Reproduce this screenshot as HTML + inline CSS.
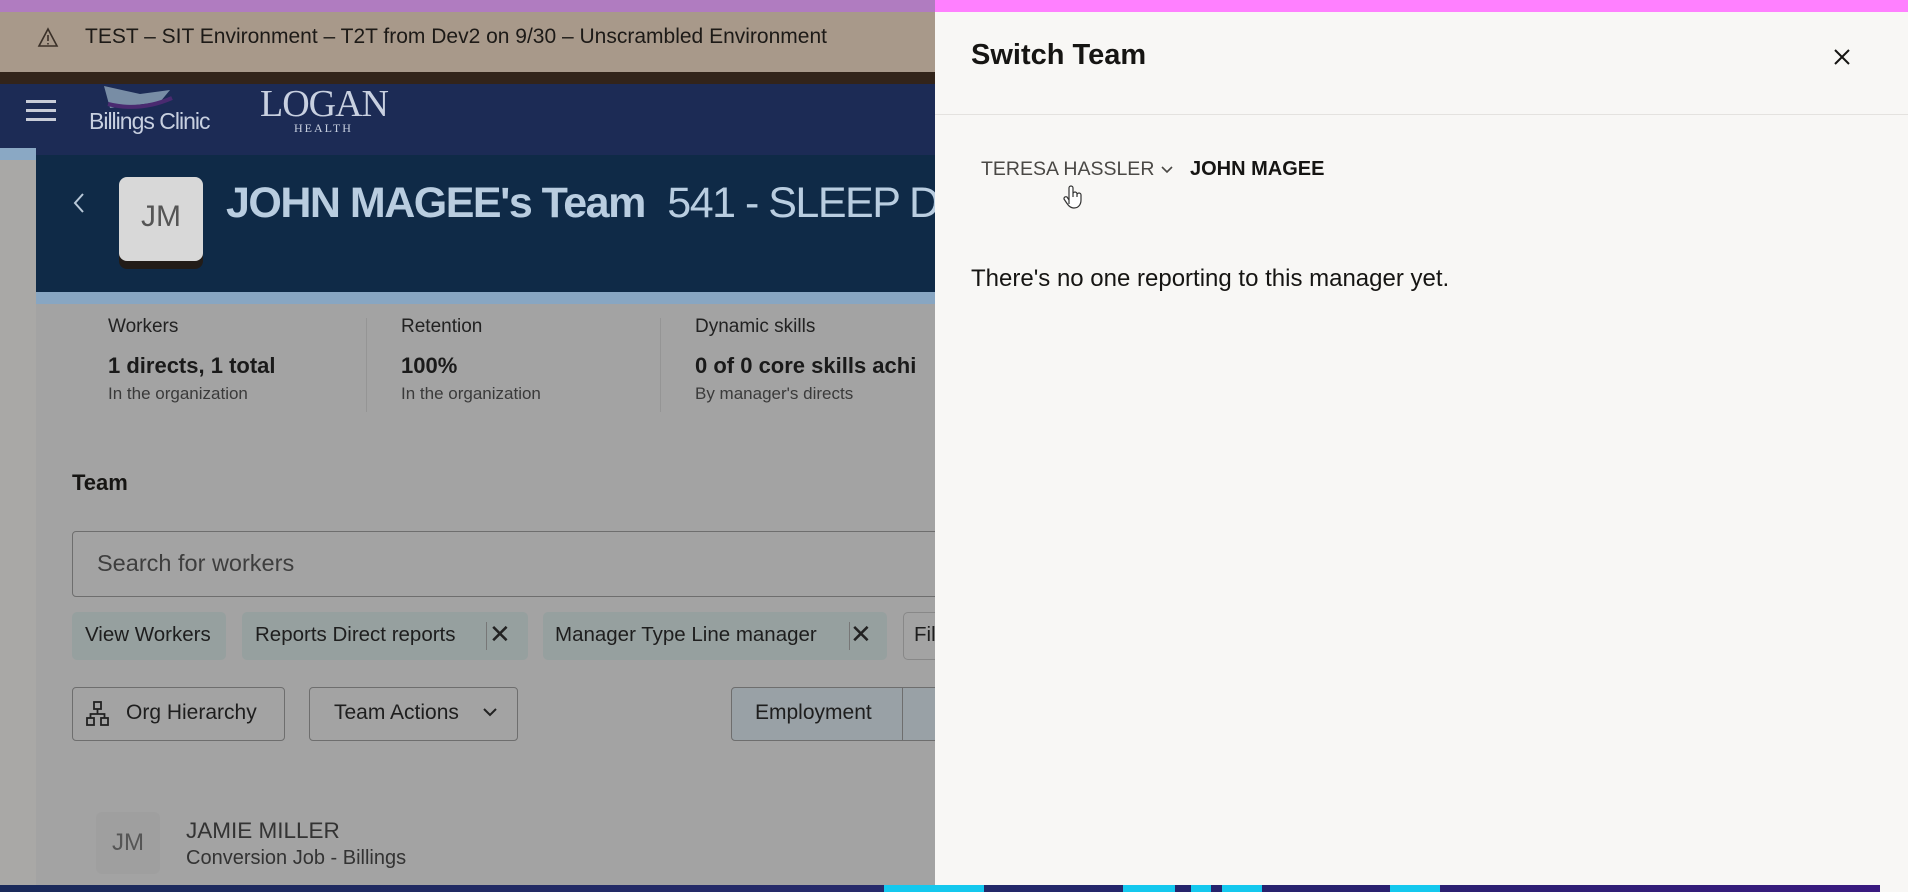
<!DOCTYPE html>
<html><head><meta charset="utf-8"><style>
*{margin:0;padding:0;box-sizing:border-box}
body{width:1908px;height:892px;overflow:hidden;position:relative;font-family:"Liberation Sans",sans-serif;background:#a3a3a3;color:#161513}
.a{position:absolute;white-space:nowrap}
</style></head><body>
<div class="a" style="left:0;top:0;width:935px;height:12px;background:#b07cc0"></div>
<div class="a" style="left:0;top:12px;width:935px;height:60px;background:#a8998a"></div>
<svg class="a" style="left:37px;top:27px" width="22" height="22" viewBox="0 0 22 22"><path d="M11 2L20 19H2Z" fill="none" stroke="#3a3028" stroke-width="1.6"/><path d="M11 8v6M11 16v1.5" stroke="#3a3028" stroke-width="1.6"/></svg>
<div class="a" style="left:85px;top:25px;font-size:21px;color:#1d1a17">TEST – SIT Environment – T2T from Dev2 on 9/30 – Unscrambled Environment</div>
<div class="a" style="left:0;top:72px;width:935px;height:12px;background:#32241a"></div>
<div class="a" style="left:0;top:84px;width:935px;height:72px;background:#1c2b55"></div>
<div class="a" style="left:26px;top:100px;width:30px;height:3px;background:#c8ccd8;box-shadow:0 9px 0 #c8ccd8,0 18px 0 #c8ccd8"></div>
<svg class="a" style="left:100px;top:82px" width="80" height="34"><path d="M4 4 L40 12 L70 8 L60 20 L10 26Z" fill="#9fb8c8" opacity=".7"/><path d="M8 22 Q40 30 72 16" stroke="#4a2a70" stroke-width="4" fill="none"/></svg>
<div class="a" style="left:89px;top:108px;font-size:23px;color:#c8d0e0;letter-spacing:-1px">Billings Clinic</div>
<div class="a" style="left:260px;top:82px;font-family:'Liberation Serif',serif;font-size:38px;color:#c8d0e0;letter-spacing:-1px">LOGAN</div>
<div class="a" style="left:294px;top:121px;font-family:'Liberation Serif',serif;font-size:12px;color:#c8d0e0;letter-spacing:2px">HEALTH</div>
<div class="a" style="left:0;top:148px;width:36px;height:12px;background:#8aa8c4"></div>
<div class="a" style="left:0;top:160px;width:36px;height:732px;background:#a9a8a6"></div>
<div class="a" style="left:36px;top:155px;width:899px;height:137px;background:#0f2a47"></div>
<div class="a" style="left:36px;top:292px;width:899px;height:12px;background:#88a6c2"></div>
<svg class="a" style="left:72px;top:191px" width="14" height="24"><path d="M11 3L3 12L11 21" stroke="#b8c8d8" stroke-width="2" fill="none"/></svg>
<div class="a" style="left:119px;top:177px;width:84px;height:84px;background:#d8d8d8;border-radius:8px;box-shadow:0 8px 0 #221c18"></div>
<div class="a" style="left:119px;top:200px;width:84px;text-align:center;font-size:30px;color:#555">JM</div>
<div class="a" style="left:226px;top:179px;font-size:43px;font-weight:bold;color:#b9cde0;letter-spacing:-1.5px">JOHN MAGEE's Team <span style="font-weight:normal;margin-left:12px">541 - SLEEP D</span></div>
<div class="a" style="left:108px;top:316px;font-size:19px;color:#222">Workers</div>
<div class="a" style="left:108px;top:353px;font-size:22px;font-weight:bold;color:#1a1a1a">1 directs, 1 total</div>
<div class="a" style="left:108px;top:384px;font-size:17px;color:#3a3a3a">In the organization</div>
<div class="a" style="left:366px;top:318px;width:1px;height:94px;background:#959595"></div>
<div class="a" style="left:401px;top:316px;font-size:19px;color:#222">Retention</div>
<div class="a" style="left:401px;top:353px;font-size:22px;font-weight:bold;color:#1a1a1a">100%</div>
<div class="a" style="left:401px;top:384px;font-size:17px;color:#3a3a3a">In the organization</div>
<div class="a" style="left:660px;top:318px;width:1px;height:94px;background:#959595"></div>
<div class="a" style="left:695px;top:316px;font-size:19px;color:#222">Dynamic skills</div>
<div class="a" style="left:695px;top:353px;font-size:22px;font-weight:bold;color:#1a1a1a">0 of 0 core skills achi</div>
<div class="a" style="left:695px;top:384px;font-size:17px;color:#3a3a3a">By manager's directs</div>
<div class="a" style="left:72px;top:470px;font-size:22px;font-weight:bold">Team</div>
<div class="a" style="left:72px;top:531px;width:880px;height:66px;border:1px solid #6e6e6e;border-radius:4px"></div>
<div class="a" style="left:97px;top:550px;font-size:23.5px;color:#3e3e3e">Search for workers</div>
<div class="a" style="left:72px;top:612px;width:154px;height:48px;background:#96a09f;border-radius:5px"></div>
<div class="a" style="left:85px;top:623px;font-size:20.5px;color:#1e1e1e">View Workers</div>
<div class="a" style="left:242px;top:612px;width:286px;height:48px;background:#96a09f;border-radius:5px"></div>
<div class="a" style="left:255px;top:623px;font-size:20.5px;color:#1e1e1e">Reports Direct reports</div>
<div class="a" style="left:486px;top:622px;width:1px;height:28px;background:#777"></div>
<div class="a" style="left:489px;top:619px;font-size:26px;color:#222">✕</div>
<div class="a" style="left:543px;top:612px;width:344px;height:48px;background:#96a09f;border-radius:5px"></div>
<div class="a" style="left:555px;top:623px;font-size:20.5px;color:#1e1e1e">Manager Type Line manager</div>
<div class="a" style="left:849px;top:622px;width:1px;height:28px;background:#777"></div>
<div class="a" style="left:850px;top:619px;font-size:26px;color:#222">✕</div>
<div class="a" style="left:903px;top:612px;width:60px;height:48px;border:1px solid #888;border-radius:5px"></div>
<div class="a" style="left:914px;top:623px;font-size:20.5px;color:#1e1e1e">Fil</div>
<div class="a" style="left:72px;top:687px;width:213px;height:54px;border:1px solid #6e6e6e;border-radius:4px"></div>
<svg class="a" style="left:86px;top:701px" width="24" height="26"><g fill="none" stroke="#222" stroke-width="1.8"><rect x="8" y="1" width="7" height="7"/><rect x="1" y="17" width="7" height="7"/><rect x="15" y="17" width="7" height="7"/><path d="M11.5 8v5M4.5 17v-4h14v4"/></g></svg>
<div class="a" style="left:126px;top:701px;font-size:21px;color:#1e1e1e">Org Hierarchy</div>
<div class="a" style="left:309px;top:687px;width:209px;height:54px;border:1px solid #6e6e6e;border-radius:4px"></div>
<div class="a" style="left:334px;top:701px;font-size:21px;color:#1e1e1e">Team Actions</div>
<svg class="a" style="left:482px;top:706px" width="16" height="12"><path d="M2 3l6 6 6-6" stroke="#222" stroke-width="2" fill="none"/></svg>
<div class="a" style="left:731px;top:687px;width:220px;height:54px;border:1px solid #6e6e6e;border-radius:4px 0 0 4px;background:#99a1a6"></div>
<div class="a" style="left:902px;top:687px;width:1px;height:54px;background:#6e6e6e"></div>
<div class="a" style="left:755px;top:701px;font-size:21px;color:#1e1e1e">Employment</div>
<div class="a" style="left:96px;top:812px;width:64px;height:62px;background:#9f9f9f;border-radius:6px"></div>
<div class="a" style="left:96px;top:829px;width:64px;text-align:center;font-size:24px;color:#555">JM</div>
<div class="a" style="left:186px;top:818px;font-size:22.5px;color:#333">JAMIE MILLER</div>
<div class="a" style="left:186px;top:847px;font-size:20px;color:#333">Conversion Job - Billings</div>
<div class="a" style="left:0;top:885px;width:1908px;height:7px;background:linear-gradient(90deg,#1a2a5a,#2a2a70 60%,#3a2080)"></div>
<div class="a" style="left:935px;top:0;width:973px;height:885px;background:#f8f7f5"></div>
<div class="a" style="left:935px;top:0;width:973px;height:12px;background:#ff80ff"></div>
<div class="a" style="left:971px;top:39px;font-size:29px;font-weight:bold;color:#161513">Switch Team</div>
<svg class="a" style="left:1832px;top:47px" width="20" height="20"><path d="M3 3L17 17M17 3L3 17" stroke="#161513" stroke-width="2"/></svg>
<div class="a" style="left:935px;top:114px;width:973px;height:1px;background:#e4e2df"></div>
<div class="a" style="left:981px;top:158px;font-size:19.5px;color:#4a4845">TERESA HASSLER</div>
<svg class="a" style="left:1160px;top:165px" width="14" height="10"><path d="M2 2l5 5 5-5" stroke="#4a4845" stroke-width="1.6" fill="none"/></svg>
<div class="a" style="left:1190px;top:158px;font-size:20px;font-weight:bold;color:#161513">JOHN MAGEE</div>
<svg class="a" style="left:1063px;top:182px" width="20" height="30"><path d="M6 22V6a2 2 0 014 0v9M10 12a2 2 0 014 0v3M14 13a2 2 0 014 0v5c0 5-3 8-7 8s-6-3-8-6l-2-3a2 2 0 013-2l2 3" stroke="#333" fill="#fff" stroke-width="1.2"/></svg>
<div class="a" style="left:971px;top:265px;font-size:24px;color:#161513">There's no one reporting to this manager yet.</div>
<div class="a" style="left:935px;top:885px;width:973px;height:7px;background:linear-gradient(90deg,#222a68,#2a2070 50%,#3a1a80)"></div>
<div class="a" style="left:884px;top:885px;width:100px;height:7px;background:#14c8ee"></div>
<div class="a" style="left:1123px;top:885px;width:52px;height:7px;background:#14c8ee"></div>
<div class="a" style="left:1191px;top:885px;width:20px;height:7px;background:#14c8ee"></div>
<div class="a" style="left:1222px;top:885px;width:40px;height:7px;background:#14c8ee"></div>
<div class="a" style="left:1390px;top:885px;width:50px;height:7px;background:#14c8ee"></div>
<div class="a" style="left:1880px;top:885px;width:28px;height:7px;background:#f8f7f5"></div>
</body></html>
